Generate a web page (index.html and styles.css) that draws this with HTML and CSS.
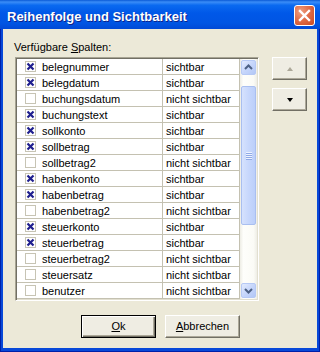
FILE: index.html
```html
<!DOCTYPE html>
<html>
<head>
<meta charset="utf-8">
<link rel="stylesheet" href="styles.css">
</head>
<body>
<div class="window">
  <div class="titlebar">
    <span class="title">Reihenfolge und Sichtbarkeit</span>
    <div class="close"><svg width="19" height="19" viewBox="0 0 19 19"><path d="M5 5 L14 14 M14 5 L5 14" stroke="#fff" stroke-width="2.4" stroke-linecap="square"/></svg></div>
  </div>
  <div class="client">
    <div class="label">Verfügbare <u>S</u>palten:</div>
    <div class="main">
      <div class="list">
        <div class="rows">
          <div class="row"><div class="c1"><span class="cb"><svg width="11" height="11" viewBox="0 0 11 11"><path d="M2.5 2.5 L8.5 8.5 M8.5 2.5 L2.5 8.5" stroke="#1f1f8e" stroke-width="2.2"/></svg></span><span class="t">belegnummer</span></div><div class="c2">sichtbar</div></div>
          <div class="row"><div class="c1"><span class="cb"><svg width="11" height="11" viewBox="0 0 11 11"><path d="M2.5 2.5 L8.5 8.5 M8.5 2.5 L2.5 8.5" stroke="#1f1f8e" stroke-width="2.2"/></svg></span><span class="t">belegdatum</span></div><div class="c2">sichtbar</div></div>
          <div class="row"><div class="c1"><span class="cb"></span><span class="t">buchungsdatum</span></div><div class="c2">nicht sichtbar</div></div>
          <div class="row"><div class="c1"><span class="cb"><svg width="11" height="11" viewBox="0 0 11 11"><path d="M2.5 2.5 L8.5 8.5 M8.5 2.5 L2.5 8.5" stroke="#1f1f8e" stroke-width="2.2"/></svg></span><span class="t">buchungstext</span></div><div class="c2">sichtbar</div></div>
          <div class="row"><div class="c1"><span class="cb"><svg width="11" height="11" viewBox="0 0 11 11"><path d="M2.5 2.5 L8.5 8.5 M8.5 2.5 L2.5 8.5" stroke="#1f1f8e" stroke-width="2.2"/></svg></span><span class="t">sollkonto</span></div><div class="c2">sichtbar</div></div>
          <div class="row"><div class="c1"><span class="cb"><svg width="11" height="11" viewBox="0 0 11 11"><path d="M2.5 2.5 L8.5 8.5 M8.5 2.5 L2.5 8.5" stroke="#1f1f8e" stroke-width="2.2"/></svg></span><span class="t">sollbetrag</span></div><div class="c2">sichtbar</div></div>
          <div class="row"><div class="c1"><span class="cb"></span><span class="t">sollbetrag2</span></div><div class="c2">nicht sichtbar</div></div>
          <div class="row"><div class="c1"><span class="cb"><svg width="11" height="11" viewBox="0 0 11 11"><path d="M2.5 2.5 L8.5 8.5 M8.5 2.5 L2.5 8.5" stroke="#1f1f8e" stroke-width="2.2"/></svg></span><span class="t">habenkonto</span></div><div class="c2">sichtbar</div></div>
          <div class="row"><div class="c1"><span class="cb"><svg width="11" height="11" viewBox="0 0 11 11"><path d="M2.5 2.5 L8.5 8.5 M8.5 2.5 L2.5 8.5" stroke="#1f1f8e" stroke-width="2.2"/></svg></span><span class="t">habenbetrag</span></div><div class="c2">sichtbar</div></div>
          <div class="row"><div class="c1"><span class="cb"></span><span class="t">habenbetrag2</span></div><div class="c2">nicht sichtbar</div></div>
          <div class="row"><div class="c1"><span class="cb"><svg width="11" height="11" viewBox="0 0 11 11"><path d="M2.5 2.5 L8.5 8.5 M8.5 2.5 L2.5 8.5" stroke="#1f1f8e" stroke-width="2.2"/></svg></span><span class="t">steuerkonto</span></div><div class="c2">sichtbar</div></div>
          <div class="row"><div class="c1"><span class="cb"><svg width="11" height="11" viewBox="0 0 11 11"><path d="M2.5 2.5 L8.5 8.5 M8.5 2.5 L2.5 8.5" stroke="#1f1f8e" stroke-width="2.2"/></svg></span><span class="t">steuerbetrag</span></div><div class="c2">sichtbar</div></div>
          <div class="row"><div class="c1"><span class="cb"></span><span class="t">steuerbetrag2</span></div><div class="c2">nicht sichtbar</div></div>
          <div class="row"><div class="c1"><span class="cb"></span><span class="t">steuersatz</span></div><div class="c2">nicht sichtbar</div></div>
          <div class="row"><div class="c1"><span class="cb"></span><span class="t">benutzer</span></div><div class="c2">nicht sichtbar</div></div>
        </div>
        <div class="scrollbar">
          <div class="sbbtn up"><svg width="13" height="13" viewBox="0 0 13 13"><path d="M3 8 L6.5 4.5 L10 8" fill="none" stroke="#4d6185" stroke-width="2"/></svg></div>
          <div class="thumb"><div class="grip"></div><div class="grip"></div><div class="grip"></div><div class="grip"></div></div>
          <div class="sbspace"></div>
          <div class="sbbtn down"><svg width="13" height="13" viewBox="0 0 13 13"><path d="M3 5 L6.5 8.5 L10 5" fill="none" stroke="#4d6185" stroke-width="2"/></svg></div>
        </div>
      </div>
      <div class="side">
        <div class="sidebtn"><span class="arr-up"></span></div>
        <div class="sidebtn"><span class="arr-down"></span></div>
      </div>
    </div>
    <div class="actions">
      <div class="btn default"><u>O</u>k</div>
      <div class="btn"><u>A</u>bbrechen</div>
    </div>
  </div>
</div>
</body>
</html>
```
FILE: styles.css
```css
html, body {
  margin: 0;
  padding: 0;
  background: #ece9d8;
}
body {
  font-family: "Liberation Sans", Arial, sans-serif;
  font-size: 11px;
  color: #000;
}
.window {
  width: 320px;
  height: 352px;
  display: flex;
  flex-direction: column;
  background: #0848d8;
  box-shadow: inset 1px 0 #0020a8, inset -1px 0 #0020a8, inset 0 -1px #0020a8;
}
.titlebar {
  height: 29px;
  flex: none;
  display: flex;
  align-items: flex-start;
  background: linear-gradient(to bottom, #0a5ad6 0%, #3b8df7 7%, #0a6af0 18%, #0058e8 45%, #0055e3 80%, #0049d6 100%);
}
.title {
  color: #fff;
  font-weight: bold;
  font-size: 13px;
  line-height: 15px;
  margin: 9px 0 0 7px;
  text-shadow: 1px 1px 0 #0d238a;
  white-space: nowrap;
}
.close {
  margin: 5px 5px 0 auto;
  width: 21px;
  height: 21px;
  box-sizing: border-box;
  border: 1px solid #fff;
  border-radius: 3px;
  background: radial-gradient(circle at 30% 30%, #ee9f80 0%, #e06e4a 45%, #c9481f 100%);
  display: flex;
  align-items: center;
  justify-content: center;
}
.close svg { display: block; }
.client {
  flex: 1;
  margin: 0 3px 4px 3px;
  background: #ece9d8;
  display: flex;
  flex-direction: column;
}
.label {
  margin: 12px 0 0 11px;
  line-height: 13px;
  height: 13px;
}
.main {
  margin: 3px 0 0 12px;
  display: flex;
  align-items: flex-start;
}
.list {
  width: 244px;
  height: 244px;
  box-sizing: border-box;
  border: 1px solid;
  border-color: #a7a493 #fff #fff #a7a493;
  box-shadow: inset 1px 1px 0 #716f64, inset -1px -1px 0 #e2dfd0;
  padding: 1px;
  background: #fff;
  display: flex;
}
.rows {
  width: 223px;
  background: #fff;
}
.row {
  display: flex;
  height: 15px;
  border-bottom: 1px solid #c4c1b1;
}
.c1 {
  width: 145px;
  border-right: 1px solid #c4c1b1;
  display: flex;
  align-items: flex-start;
}
.cb {
  width: 11px;
  height: 11px;
  box-sizing: border-box;
  margin: 2px 0 0 8px;
  border: 1px solid #c7c4b4;
  background: #fff;
  position: relative;
  flex: none;
}
.cb svg {
  position: absolute;
  left: -1px;
  top: -1px;
  display: block;
}
.t {
  margin-left: 6px;
  padding-top: 1px;
  line-height: 14px;
  white-space: nowrap;
}
.c2 {
  width: 73px;
  padding-left: 3px;
  padding-top: 1px;
  line-height: 14px;
  border-right: 1px solid #c4c1b1;
  white-space: nowrap;
}
.scrollbar {
  width: 17px;
  height: 240px;
  display: flex;
  flex-direction: column;
  background: linear-gradient(to right, #eeede5 0%, #fefefb 20%, #fbfbf6 80%, #eeede5 100%);
}
.sbbtn {
  width: 15px;
  height: 15px;
  box-sizing: border-box;
  margin: 1px 0 0 1px;
  border: 1px solid #b6c9f5;
  border-radius: 2px;
  background: linear-gradient(135deg, #e3ebfe 0%, #c6d6fb 50%, #b3c7f6 100%);
  display: flex;
  align-items: center;
  justify-content: center;
  flex: none;
}
.sbbtn svg { display: block; }
.sbbtn.down { margin: 0 0 1px 1px; }
.thumb {
  width: 15px;
  height: 139px;
  box-sizing: border-box;
  margin: 11px 0 0 1px;
  border: 1px solid #a9bff0;
  border-radius: 2px;
  background: linear-gradient(to right, #d6e2fd 0%, #c7d7fc 50%, #bccffa 100%);
  display: flex;
  flex-direction: column;
  justify-content: center;
  align-items: center;
  gap: 1px;
  flex: none;
}
.grip {
  width: 6px;
  height: 1px;
  background: #eef3ff;
  box-shadow: 0 1px 0 #8fa9e6;
}
.sbspace { flex: 1; }
.side {
  margin-left: 13px;
  display: flex;
  flex-direction: column;
  gap: 8px;
}
.sidebtn {
  width: 35px;
  height: 23px;
  box-sizing: border-box;
  border: 1px solid;
  border-color: #fff #716f64 #716f64 #fff;
  box-shadow: inset -1px -1px 0 #aca899;
  background: #efede3;
  display: flex;
  align-items: center;
  justify-content: center;
}
.arr-up {
  width: 0;
  height: 0;
  border-left: 3.5px solid transparent;
  border-right: 3.5px solid transparent;
  border-bottom: 4px solid #aca899;
}
.arr-down {
  width: 0;
  height: 0;
  border-left: 3.5px solid transparent;
  border-right: 3.5px solid transparent;
  border-top: 4px solid #000;
}
.actions {
  margin: 14px 0 0 78px;
  display: flex;
  gap: 9px;
}
.btn {
  width: 75px;
  height: 23px;
  box-sizing: border-box;
  border: 1px solid;
  border-color: #fff #716f64 #716f64 #fff;
  box-shadow: inset -1px -1px 0 #aca899;
  background: #efede3;
  display: flex;
  align-items: center;
  justify-content: center;
  line-height: 13px;
}
.btn.default {
  border-color: #000;
  box-shadow: inset 1px 1px 0 #fff, inset -1px -1px 0 #716f64, inset -2px -2px 0 #aca899;
}
.btn u { text-decoration-thickness: 1px; }
```
